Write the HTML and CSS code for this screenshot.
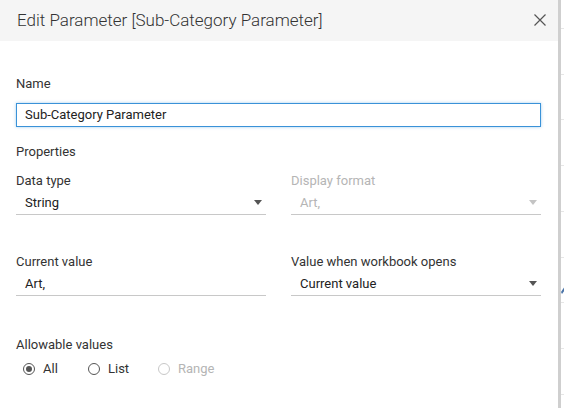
FILE: index.html
```html
<!DOCTYPE html>
<html>
<head>
<meta charset="utf-8">
<link rel="stylesheet" href="styles.css">
</head>
<body>
<div class="page">
  <div class="dialog">
    <div class="header">
      <div class="title">Edit Parameter [Sub-Category Parameter]</div>
      <svg class="close" width="12" height="12" viewBox="0 0 12 12"><path d="M0.5 0.5 L11.5 11.5 M11.5 0.5 L0.5 11.5" stroke="#555" stroke-width="1.2" fill="none"/></svg>
    </div>
    <div class="content">
      <div class="label name-label">Name</div>
      <div class="input">Sub-Category Parameter</div>
      <div class="label section">Properties</div>
      <div class="grid row1">
        <div class="field">
          <div class="label">Data type</div>
          <div class="dropdown"><span>String</span><span class="arrow"></span></div>
        </div>
        <div class="field disabled">
          <div class="label">Display format</div>
          <div class="dropdown"><span>Art,</span><span class="arrow"></span></div>
        </div>
      </div>
      <div class="grid row2">
        <div class="field">
          <div class="label">Current value</div>
          <div class="dropdown"><span>Art,</span></div>
        </div>
        <div class="field">
          <div class="label">Value when workbook opens</div>
          <div class="dropdown"><span>Current value</span><span class="arrow"></span></div>
        </div>
      </div>
      <div class="label section2">Allowable values</div>
      <div class="radios">
        <div class="radio checked"><span class="circle"></span><span>All</span></div>
        <div class="radio"><span class="circle"></span><span>List</span></div>
        <div class="radio disabled"><span class="circle"></span><span>Range</span></div>
      </div>
    </div>
  </div>
  <div class="strip">
    <svg class="mark" width="4" height="10" viewBox="0 0 4 10"><path d="M0 8 L4 2 L4 6 L1 10 Z" fill="#4a74a8"/></svg>
  </div>
</div>
</body>
</html>
```
FILE: styles.css
```css
html, body {
  margin: 0;
  padding: 0;
  background: #fff;
}
body {
  font-family: Roboto, "Liberation Sans", sans-serif;
  color: #333;
  width: 564px;
  height: 408px;
  overflow: hidden;
}
.page {
  display: flex;
  width: 564px;
  height: 408px;
}
.dialog {
  width: 558px;
  flex: none;
  background: #fff;
}
.header {
  height: 41px;
  background: #f5f5f5;
  display: flex;
  align-items: center;
  justify-content: space-between;
  padding: 0 12px 0 17px;
  box-sizing: border-box;
}
.title {
  font-size: 17px;
  font-weight: 300;
  color: #333;
  margin-top: -2px;
}
.close {
  display: block;
  margin-top: -2px;
}
.content {
  padding: 0 17px 0 16px;
}
.label {
  font-size: 13px;
  line-height: 16px;
  color: #333;
}
.name-label {
  padding-top: 35px;
}
.input {
  margin-top: 11px;
  height: 24px;
  box-sizing: border-box;
  border: 1px solid #3a92d8;
  box-shadow: 0 0 3px rgba(58, 146, 216, 0.45);
  font-size: 13px;
  line-height: 22px;
  padding-left: 8px;
  color: #222;
}
.section {
  margin-top: 17px;
}
.grid {
  display: grid;
  grid-template-columns: 250px 250px;
  column-gap: 25px;
}
.row1 {
  margin-top: 13px;
}
.row2 {
  margin-top: 39px;
}
.dropdown {
  margin-top: 1px;
  height: 25px;
  box-sizing: border-box;
  border-bottom: 1px solid #c8c8c8;
  display: flex;
  align-items: center;
  justify-content: space-between;
  padding: 0 4px 0 9px;
  font-size: 13px;
  color: #222;
}
.arrow {
  width: 0;
  height: 0;
  border-left: 4px solid transparent;
  border-right: 4px solid transparent;
  border-top: 5px solid #555;
}
.disabled .label,
.disabled .dropdown {
  color: #b5b5b5;
}
.disabled .arrow {
  border-top-color: #c4c4c4;
}
.section2 {
  margin-top: 41px;
}
.radios {
  margin-top: 8px;
  display: flex;
  padding-left: 7px;
  font-size: 13px;
  line-height: 16px;
}
.radio {
  display: flex;
  align-items: center;
  gap: 8px;
}
.radio:nth-child(1) { width: 45px; margin-right: 20px; }
.radio:nth-child(2) { width: 50px; margin-right: 20px; }
.circle {
  width: 12px;
  height: 12px;
  box-sizing: border-box;
  border: 1px solid #555;
  border-radius: 50%;
  display: flex;
  align-items: center;
  justify-content: center;
}
.checked .circle::after {
  content: "";
  width: 6px;
  height: 6px;
  border-radius: 50%;
  background: #555;
}
.radio.disabled {
  color: #b5b5b5;
}
.radio.disabled .circle {
  border-color: #c8c8c8;
}
.strip {
  flex: 1;
  border-left: 3px solid #cfcfcf;
  background: repeating-linear-gradient(to bottom, #fff 0, #fff 28px, #e6e6e6 28px, #e6e6e6 29px, #fff 29px, #fff 45.7px);
  position: relative;
}
.mark {
  position: absolute;
  left: 0;
  top: 284px;
}
```
